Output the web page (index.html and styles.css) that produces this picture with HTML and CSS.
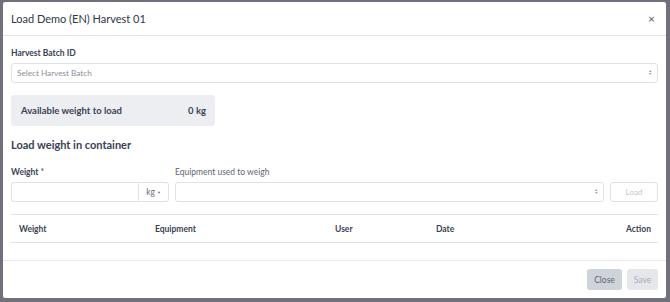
FILE: index.html
```html
<!DOCTYPE html>
<html lang="en">
<head>
    <meta charset="UTF-8">
    <meta name="viewport" content="width=device-width, initial-scale=1.0">
    <title>Load Harvest</title>
    <link rel="stylesheet" href="styles.css">
</head>
<body>
    <div class="backdrop">
        <div class="modal">
            <div class="modal-header">
                <h1>Load Demo (EN) Harvest 01</h1>
                <span class="close-x">&times;</span>
            </div>
            <div class="modal-body">
                <label class="label bold">Harvest Batch ID</label>
                <div class="select wide">
                    <span class="placeholder">Select Harvest Batch</span>
                    <span class="arrows">&#9650;<br>&#9660;</span>
                </div>
                <div class="available">
                    <span>Available weight to load</span>
                    <span>0 kg</span>
                </div>
                <h2>Load weight in container</h2>
                <div class="load-row">
                    <div class="field weight-field">
                        <label class="label bold">Weight <span class="req">*</span></label>
                        <div class="input-group">
                            <div class="input"></div>
                            <div class="addon">kg <span class="caret">&#9660;</span></div>
                        </div>
                    </div>
                    <div class="field equip-field">
                        <label class="label">Equipment used to weigh</label>
                        <div class="select">
                            <span class="placeholder"></span>
                            <span class="arrows">&#9650;<br>&#9660;</span>
                        </div>
                    </div>
                    <button class="btn-load" disabled>Load</button>
                </div>
                <table class="loads">
                    <thead>
                        <tr>
                            <th class="c-weight">Weight</th>
                            <th class="c-equip">Equipment</th>
                            <th class="c-user">User</th>
                            <th class="c-date">Date</th>
                            <th class="c-action">Action</th>
                        </tr>
                    </thead>
                </table>
            </div>
            <div class="modal-footer">
                <button class="btn btn-close">Close</button>
                <button class="btn btn-save" disabled>Save</button>
            </div>
        </div>
    </div>
</body>
</html>
```

FILE: styles.css
```css
* {
    box-sizing: border-box;
}
body {
    margin: 0;
    font-family: Lato, "Liberation Sans", sans-serif;
    color: #3a4254;
}
.backdrop {
    width: 670px;
    height: 302px;
    background-color: #6f7079;
    padding: 2px 4px 4px 3px;
}
.modal {
    background-color: white;
    height: 100%;
    display: flex;
    flex-direction: column;
    border-radius: 2px;
}
.modal-header {
    height: 34px;
    display: flex;
    align-items: center;
    justify-content: space-between;
    padding: 0 11px 0 8px;
    border-bottom: 1px solid #e3e5e9;
}
h1 {
    margin: 0;
    font-size: 11px;
    font-weight: normal;
    color: #2f3747;
}
.close-x {
    font-size: 12px;
    color: #555b66;
}
.modal-body {
    flex: 1;
    padding: 12px 8px 0 8px;
}
.label {
    display: block;
    font-size: 8.5px;
    color: #5f6673;
    margin-bottom: 5px;
}
.label.bold {
    font-weight: bold;
    color: #3a4254;
}
.req {
    font-weight: normal;
}
.select, .input, .addon {
    height: 20px;
    border: 1px solid #dfe2e6;
    border-radius: 3px;
    background-color: white;
}
.select {
    display: flex;
    align-items: center;
    justify-content: space-between;
    padding: 0 5px;
}
.placeholder {
    font-size: 8.2px;
    color: #8a909a;
}
.arrows {
    font-size: 3.5px;
    line-height: 3.5px;
    color: #8a8f98;
    text-align: center;
}
.available {
    width: 204px;
    height: 31px;
    margin-top: 12px;
    background-color: #eceef1;
    border-radius: 3px;
    display: flex;
    align-items: center;
    justify-content: space-between;
    padding: 0 9px 0 10px;
    font-size: 9.5px;
    font-weight: bold;
}
h2 {
    margin: 12px 0 16px 0;
    font-size: 11px;
    font-weight: bold;
}
.load-row {
    display: flex;
    align-items: flex-end;
    gap: 6px;
}
.load-row .select, .load-row .input, .load-row .addon, .btn-load {
    height: 20px;
}
.weight-field {
    width: 158px;
}
.equip-field {
    flex: 1;
}
.input-group {
    display: flex;
}
.input {
    flex: 1;
    border-right: none;
    border-radius: 3px 0 0 3px;
}
.addon {
    width: 31px;
    border-radius: 0 3px 3px 0;
    font-size: 8.5px;
    color: #6b7280;
    display: flex;
    align-items: center;
    justify-content: center;
    gap: 2px;
}
.caret {
    font-size: 4px;
}
.btn-load {
    width: 48px;
    border: 1px solid #dfe2e6;
    border-radius: 3px;
    background-color: white;
    color: #c2c6cc;
    font-family: inherit;
    font-size: 8px;
}
.loads {
    width: 100%;
    margin-top: 12px;
    border-collapse: collapse;
    border-top: 1px solid #dfe2e6;
    border-bottom: 1px solid #dfe2e6;
}
.loads th {
    height: 28px;
    font-size: 8.5px;
    font-weight: bold;
    text-align: left;
    padding: 0;
}
.c-weight {
    width: 144px;
    padding-left: 8px !important;
}
.c-equip {
    width: 180px;
}
.c-user {
    width: 101px;
}
.c-action {
    text-align: right !important;
    padding-right: 7px !important;
}
.modal-footer {
    height: 38px;
    border-top: 1px solid #e8e9ec;
    display: flex;
    align-items: center;
    justify-content: flex-end;
    gap: 5px;
    padding: 0 8px;
}
.btn {
    height: 21px;
    border: none;
    border-radius: 3px;
    font-family: inherit;
    font-size: 8.5px;
}
.btn-close {
    width: 35px;
    background-color: #cfd3da;
    color: #5f6673;
}
.btn-save {
    width: 31px;
    background-color: #e5e7eb;
    color: #a7acb5;
}
```
